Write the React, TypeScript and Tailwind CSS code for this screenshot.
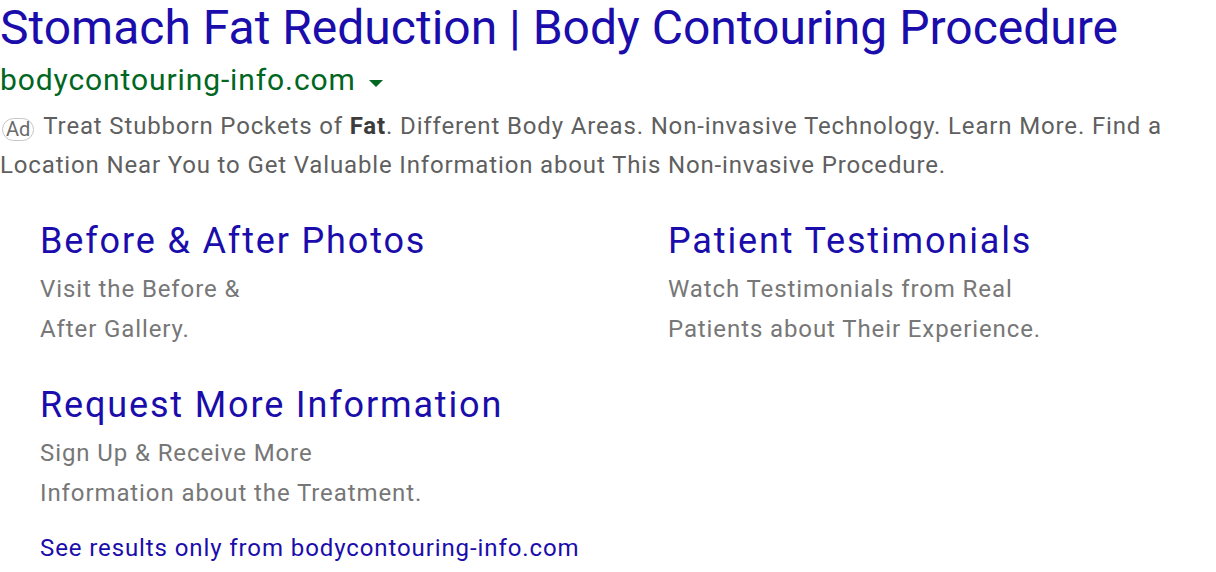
const sitelinks = [
  {
    title: "Before & After Photos",
    lines: ["Visit the Before &", "After Gallery."],
  },
  {
    title: "Patient Testimonials",
    lines: ["Watch Testimonials from Real", "Patients about Their Experience."],
  },
  {
    title: "Request More Information",
    lines: ["Sign Up & Receive More", "Information about the Treatment."],
  },
];

export default function App() {
  return (
    <div className="min-h-[572px] w-[1216px] bg-white font-['Roboto',_'Liberation_Sans',_sans-serif]">
      <a className="block text-[48px] leading-[56px] text-[#1a0dab] whitespace-nowrap">
        Stomach Fat Reduction | Body Contouring Procedure
      </a>

      <div className="mt-[6px] flex items-center text-[30px] leading-[36px] tracking-[0.9px] text-[#006621]">
        <span>bodycontouring-info.com</span>
        <svg width="14" height="8" viewBox="0 0 14 8" className="ml-[13px] mt-[8px]">
          <polygon points="0,0 14,0 7,7" fill="#006621" />
        </svg>
      </div>

      <p className="mt-[9px] pr-[30px] text-[24px] leading-[39px] tracking-[0.85px] text-[#5f5f5f]">
        <span className="ml-[2px] mr-[9px] inline-flex h-[23px] items-center rounded-[12px] border border-[#c6c6c6] px-[3px] align-[-2px] text-[20px] leading-none tracking-normal text-[#6a6a6a]">
          Ad
        </span>
        Treat Stubborn Pockets of <b className="font-bold text-[#3c3c3c]">Fat</b>. Different Body Areas. Non-invasive Technology. Learn More. Find a Location Near You to Get Valuable Information about This Non-invasive Procedure.
      </p>

      <div className="mt-[34px] grid grid-cols-[628px_1fr] gap-y-[34px] pl-[40px]">
        {sitelinks.map((s) => (
          <div key={s.title}>
            <a className="block text-[36px] leading-[44px] tracking-[1.85px] text-[#1a0dab]">{s.title}</a>
            <div className="mt-[6px] text-[24px] leading-[40px] tracking-[0.9px] text-[#777777]">
              {s.lines.map((l) => (
                <div key={l}>{l}</div>
              ))}
            </div>
          </div>
        ))}
      </div>

      <a className="mt-[19px] block pl-[40px] text-[24px] leading-[32px] tracking-[0.9px] text-[#1a0dab]">
        See results only from bodycontouring-info.com
      </a>
    </div>
  );
}
